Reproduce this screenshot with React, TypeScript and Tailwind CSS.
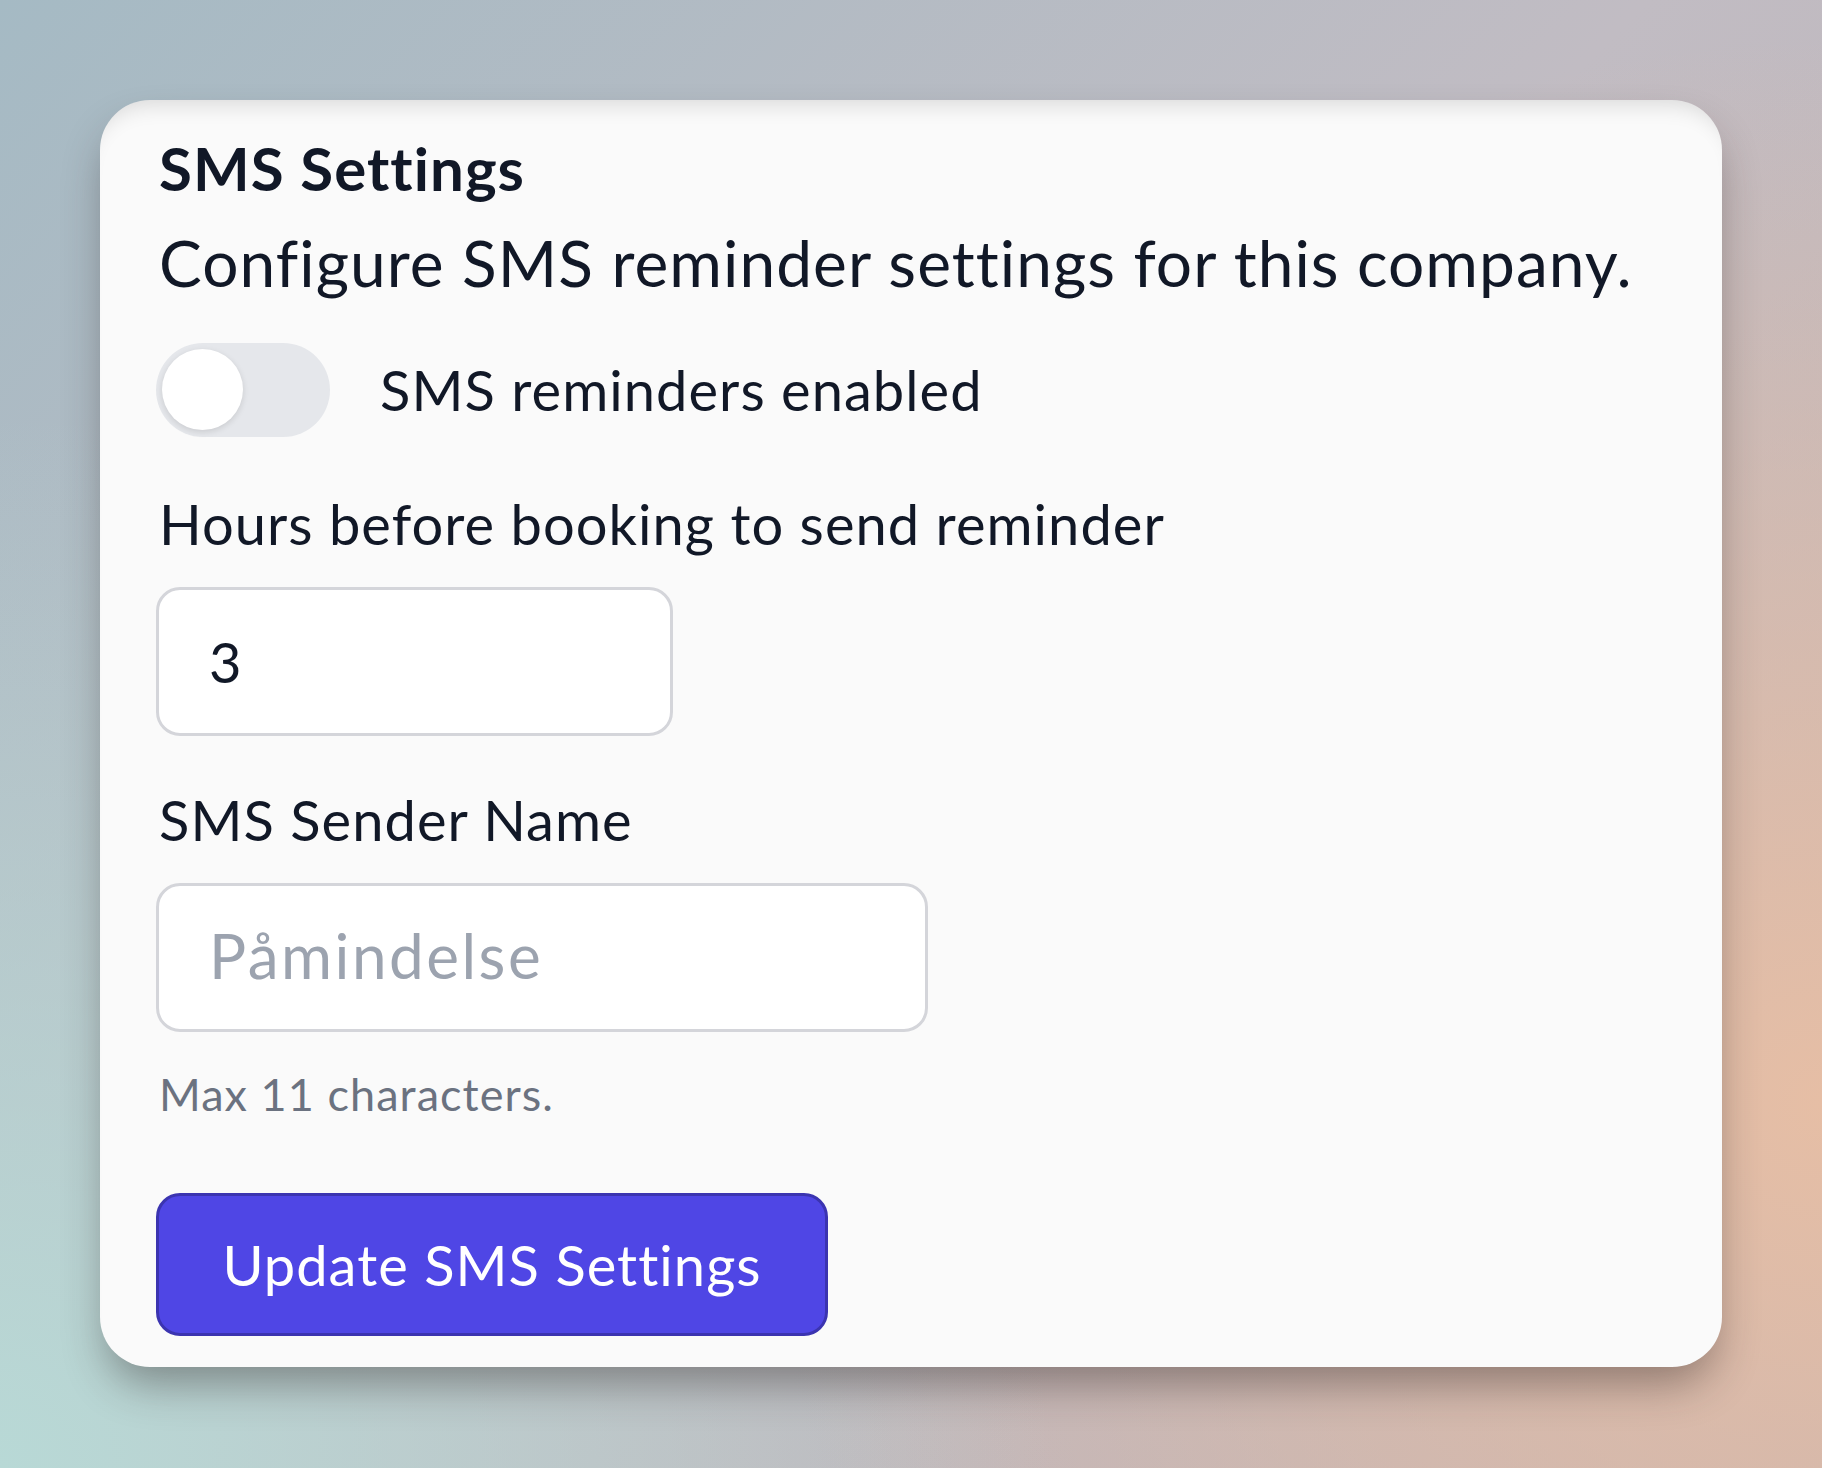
import React from "react";

export default function App(): React.ReactElement {
  return (
    <div className="min-h-screen w-full bg-[radial-gradient(circle_at_0%_100%,#b8d9d6_0%,transparent_45%),radial-gradient(circle_at_100%_75%,#e6bea5_0%,transparent_50%),linear-gradient(135deg,#a5bac4_0%,#c1bcc3_50%,#bdb0b3_100%)] p-[100px] font-['Lato',sans-serif] tracking-[1.05px]">
      <div className="rounded-[50px] bg-[#fafafa] px-[56px] pt-[32px] pb-[31px] text-[#111827] shadow-[0_24px_44px_-8px_rgba(40,30,30,0.42),inset_0_22px_22px_-18px_rgba(0,0,0,0.14)]">
        <h1 className="pl-[3px] text-[60px] leading-[1.2] font-bold">SMS Settings</h1>
        <p className="mt-[21px] pl-[3px] text-[64px] leading-[1.2]">Configure SMS reminder settings for this company.</p>

        <div className="mt-[41px] flex items-center gap-[50px]">
          <button
            type="button"
            role="switch"
            aria-checked="false"
            className="flex h-[94px] w-[174px] items-center rounded-full bg-[#e5e7eb] px-[6px]"
          >
            <span className="h-[81px] w-[81px] rounded-full bg-white shadow-[0_2px_6px_rgba(0,0,0,0.12)]" />
          </button>
          <span className="text-[56px] leading-[1.25]">SMS reminders enabled</span>
        </div>

        <label className="mt-[52px] block pl-[3px] text-[56px] leading-[1.25]">Hours before booking to send reminder</label>
        <input
          type="number"
          defaultValue={3}
          className="mt-[28px] block h-[149px] w-[517px] rounded-[24px] border-[3px] border-[#d4d5da] bg-white px-[50px] text-[56px] text-[#111827] outline-none"
        />

        <label className="mt-[49px] block pl-[3px] text-[56px] leading-[1.25]">SMS Sender Name</label>
        <input
          type="text"
          placeholder="Påmindelse"
          className="mt-[28px] block h-[149px] w-[772px] rounded-[24px] border-[3px] border-[#d4d5da] bg-white px-[50px] text-[56px] tracking-[2.5px] text-[#111827] outline-none placeholder:text-[62px] placeholder:text-[#9ca3af]"
        />
        <p className="mt-[34px] pl-[3px] text-[45px] leading-[1.25] text-[#6b7280]">Max 11 characters.</p>

        <button
          type="button"
          className="mt-[71px] flex h-[143px] w-[672px] items-center justify-center rounded-[24px] border-[3px] border-[#3b34b0] bg-[#4f46e5] text-[56px] text-white"
        >
          Update SMS Settings
        </button>
      </div>
    </div>
  );
}
